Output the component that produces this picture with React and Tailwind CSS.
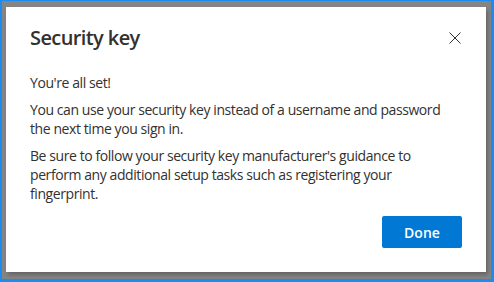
import React from 'react';

export default function App() {
    return (
        <div
            className="w-[494px] h-[282px] border-l-2 border-t border-r-[3px] border-b-[3px] border-[#1a8cf2] bg-[#858585] pl-[4px] pt-[6px] pr-[5px] pb-[7px] text-[#323130]"
            style={{ fontFamily: '"Open Sans", "Noto Sans", sans-serif' }}
        >
            {/* Dialog */}
            <div className="h-full bg-white shadow-[2px_3px_4px_rgba(0,0,0,0.25)] pl-6 pr-[25px] pt-[15px] pb-6 flex flex-col">
                <div className="flex items-center justify-between h-[32px]">
                    <h2 className="text-[20px] font-semibold leading-7 tracking-[-0.6px]">Security key</h2>
                    <button className="w-[12px] h-[12px] flex items-center justify-center text-[#323130]">
                        <svg width="12" height="12" viewBox="0 0 12 12" fill="none" stroke="currentColor" strokeWidth="1">
                            <path d="M0.5 0.5L11.5 11.5M11.5 0.5L0.5 11.5" />
                        </svg>
                    </button>
                </div>

                <div className="mt-[19px] text-[14px] leading-[19px] tracking-[-0.42px] space-y-2">
                    <p>You're all set!</p>
                    <p>You can use your security key instead of a username and password the next time you sign in.</p>
                    <p>Be sure to follow your security key manufacturer's guidance to perform any additional setup tasks such as registering your fingerprint.</p>
                </div>

                <div className="mt-auto flex justify-end pr-[-1px]">
                    <button className="w-[80px] h-[32px] mr-[-1px] rounded-[2px] bg-[#0078d4] text-white text-[14px] font-semibold">
                        Done
                    </button>
                </div>
            </div>
        </div>
    );
}
